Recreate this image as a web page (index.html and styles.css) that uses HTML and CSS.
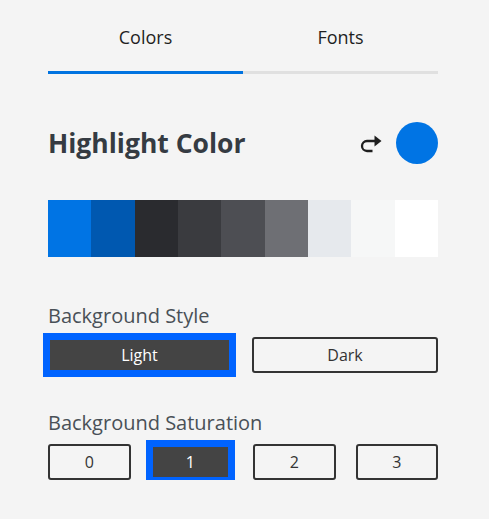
FILE: index.html
```html
<!DOCTYPE html>
<html lang="en">
<head>
<meta charset="utf-8">
<title>Theme settings</title>
<link rel="stylesheet" href="styles.css">
</head>
<body>
<div class="panel">
  <nav class="tabs">
    <div class="tab active">Colors</div>
    <div class="tab">Fonts</div>
  </nav>

  <div class="heading-row">
    <h2 class="heading">Highlight Color</h2>
    <div class="heading-actions">
      <svg class="redo" width="22" height="19" viewBox="0 0 22 19" aria-hidden="true">
        <path d="M15.5 7 H7 a5 5 0 0 0 0 10 H12.5" fill="none" stroke="#1e1e1e" stroke-width="2.3"/>
        <path d="M14.5 1.5 L21.5 7 L14.5 12.5 Z" fill="#1e1e1e"/>
      </svg>
      <div class="current-color"></div>
    </div>
  </div>

  <div class="swatches">
    <div class="swatch s1"></div>
    <div class="swatch s2"></div>
    <div class="swatch s3"></div>
    <div class="swatch s4"></div>
    <div class="swatch s5"></div>
    <div class="swatch s6"></div>
    <div class="swatch s7"></div>
    <div class="swatch s8"></div>
    <div class="swatch s9"></div>
  </div>

  <div class="group group-style">
    <div class="group-label">Background Style</div>
    <div class="options two">
      <button class="opt selected">Light</button>
      <button class="opt">Dark</button>
    </div>
  </div>

  <div class="group group-sat">
    <div class="group-label">Background Saturation</div>
    <div class="options four">
      <button class="opt">0</button>
      <button class="opt selected">1</button>
      <button class="opt">2</button>
      <button class="opt">3</button>
    </div>
  </div>
</div>
</body>
</html>
```

FILE: styles.css
```css
html, body {
  margin: 0;
  padding: 0;
  background: #f4f4f4;
}

body {
  font-family: "Open Sans", "Noto Sans", sans-serif;
  color: #333;
}

.panel {
  padding: 0 51px 0 48px;
}

.tabs {
  display: flex;
}

.tab {
  flex: 1;
  text-align: center;
  font-size: 18px;
  line-height: 24px;
  padding: 25px 0 22px;
  color: #1f1f1f;
  border-bottom: 3px solid #e0e0e0;
}

.tab.active {
  border-bottom-color: #0073e0;
}

.heading-row {
  margin-top: 48px;
  display: flex;
  align-items: center;
  justify-content: space-between;
  height: 42px;
}

.heading {
  margin: 0;
  font-size: 26.5px;
  font-weight: 700;
  color: #353b42;
  line-height: 32px;
}

.heading-actions {
  display: flex;
  align-items: center;
  gap: 14px;
}

.redo {
  display: block;
}

.current-color {
  width: 42px;
  height: 42px;
  border-radius: 50%;
  background: #0074e4;
}

.swatches {
  margin-top: 36px;
  display: grid;
  grid-template-columns: repeat(9, 1fr);
  height: 57px;
}

.s1 { background: #0074e4; }
.s2 { background: #0058b0; }
.s3 { background: #2a2b2f; }
.s4 { background: #3a3b3f; }
.s5 { background: #4d4e53; }
.s6 { background: #6e6f74; }
.s7 { background: #e6e9ed; }
.s8 { background: #f6f7f7; }
.s9 { background: #ffffff; }

.group {
  display: flex;
  flex-direction: column;
  gap: 9px;
}

.group-style {
  margin-top: 47px;
}

.group-sat {
  margin-top: 38px;
}

.group-label {
  font-size: 20px;
  line-height: 24px;
  color: #495057;
}

.options {
  display: grid;
  height: 36px;
}

.options.two {
  grid-template-columns: 1fr 1fr;
  gap: 18px;
}

.options.four {
  grid-template-columns: repeat(4, 1fr);
  gap: 20px;
}

.opt {
  font-family: "Open Sans", "Noto Sans", sans-serif;
  font-size: 16px;
  color: #333;
  background: #f4f4f4;
  border: 2px solid #333;
  border-radius: 3px;
  padding: 0;
  margin: 0;
}

.opt.selected {
  background: #444444;
  color: #ffffff;
  border: 7px solid #0063ff;
  border-radius: 0;
  margin: -4px -2px -4px -5px;
}
```
